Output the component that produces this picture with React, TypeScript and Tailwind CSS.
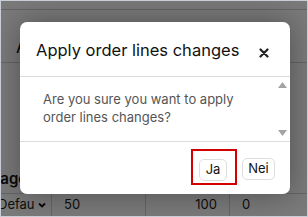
import React from "react";

export default function App() {
  return (
    <div className="relative w-[308px] h-[217px] overflow-hidden bg-white border border-[#c9ced6]" style={{ fontFamily: "Inter, 'Liberation Sans', sans-serif" }}>
      {/* background page */}
      <div className="flex flex-col h-full">
        <div className="h-[9px] border-b border-[#d4d4d4]" />
        <div className="h-[44px] pl-[15px] pt-[28px] text-[18px] leading-[18px] text-[#111]">A</div>
        <div className="h-[9px] border-b border-[#d4d4d4]" />
        <div className="h-[104px]" />
        <div className="h-[24px] flex items-center -ml-[20px] font-semibold text-[15px] text-[#111]">Usage</div>
        <div className="h-[2px]" />
        <div className="flex-1 flex items-center text-[13px] text-[#222] border-t border-[#d4d4d4]">
          <div className="w-[54px] h-full flex items-center justify-between pr-[4px] -ml-[3px] border-r border-[#d4d4d4]">
            <span>Defau</span>
            <svg width="10" height="10" viewBox="0 0 10 10"><path d="M2 3.5 L5 6.5 L8 3.5" fill="none" stroke="#111" strokeWidth="1.8" /></svg>
          </div>
          <div className="w-[94px] h-full flex items-center pl-[12px] border-r border-[#d4d4d4]">50</div>
          <div className="w-[84px] h-full flex items-center justify-end pr-[12px] border-r border-[#d4d4d4]">100</div>
          <div className="flex-1 h-full flex items-center pl-[12px]">0</div>
        </div>
      </div>

      {/* overlay */}
      <div className="absolute inset-0 bg-black/[0.52]">
        <div className="absolute left-[19px] top-[21px] w-[270px] h-[172px] bg-white rounded-[7px] shadow-[0_0_30px_rgba(0,0,0,0.35)] flex flex-col">
          <div className="h-[55px] flex items-center justify-between pl-[16px] pr-[21px] border-b border-[#dcdcdc]">
            <span className="text-[16.5px] text-[#111] pt-[2px]">Apply order lines changes</span>
            <svg width="10" height="10" viewBox="0 0 10 10" className="mt-[8px]"><path d="M1.5 1.5 L8.5 8.5 M8.5 1.5 L1.5 8.5" stroke="#222" strokeWidth="2.2" strokeLinecap="round" /></svg>
          </div>
          <div className="h-[65px] flex border-b border-[#dcdcdc]">
            <div className="flex-1 pl-[23px] pt-[13px] text-[13px] leading-[18px] text-[#555]">
              <p className="w-[195px]">Are you sure you want to apply order lines changes?</p>
            </div>
            <div className="w-[12px] mr-[2px] flex flex-col justify-between items-center py-[5px]">
              <svg width="9" height="6" viewBox="0 0 9 6"><path d="M0 6 L4.5 0 L9 6 Z" fill="#a3a3a3" /></svg>
              <svg width="9" height="6" viewBox="0 0 9 6"><path d="M0 0 L4.5 6 L9 0 Z" fill="#a3a3a3" /></svg>
            </div>
          </div>
          <div className="flex-1 flex items-center justify-end gap-[15px] pr-[15px] pt-[1px]">
            <div className="relative">
              <button className="h-[22px] w-[28px] rounded-[5px] border border-[#dedede] bg-white text-[13px] text-[#111] leading-none">Ja</button>
              <div className="absolute -left-[8px] -top-[7px] w-[46px] h-[36px] border-2 border-[#d40000]" />
            </div>
            <button className="h-[22px] w-[33px] rounded-[5px] border border-[#dedede] bg-white text-[13px] text-[#111] leading-none">Nei</button>
          </div>
        </div>
      </div>
    </div>
  );
}
